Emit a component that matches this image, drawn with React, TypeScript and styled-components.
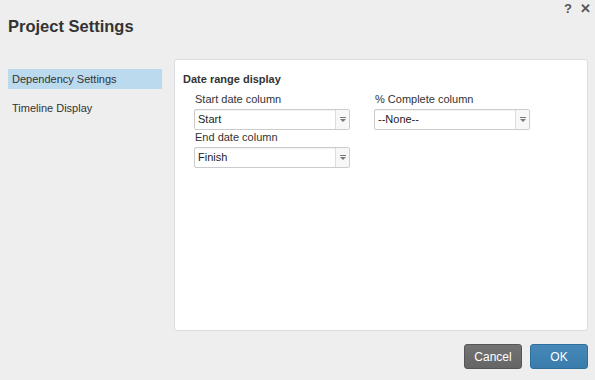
import styled, { createGlobalStyle } from "styled-components";

const GlobalStyle = createGlobalStyle`
    html, body {
        margin: 0;
        padding: 0;
        background: #eeeeee;
    }
    body {
        font-family: "Liberation Sans", Arial, sans-serif;
        color: #333333;
    }
`;

const Dialog = styled.div`
    width: 595px;
    height: 380px;
    display: flex;
    flex-direction: column;
    background: #eeeeee;
    position: relative;
    box-sizing: border-box;
`;

const Header = styled.div`
    height: 59px;
    padding: 17px 0 0 8px;
    box-sizing: border-box;
`;

const Title = styled.h1`
    margin: 0;
    font-size: 16.5px;
    font-weight: bold;
    color: #333333;
`;

const TopIcons = styled.div`
    position: absolute;
    top: 1px;
    right: 4px;
    display: flex;
    gap: 8px;
    font-size: 13px;
    color: #555555;
    font-weight: bold;
`;

const Body = styled.div`
    display: flex;
    gap: 12px;
    padding: 0 7px 0 8px;
    height: 272px;
`;

const Nav = styled.div`
    width: 154px;
    padding-top: 10px;
    display: flex;
    flex-direction: column;
`;

const NavItem = styled.div<{ $active?: boolean }>`
    height: 20px;
    line-height: 20px;
    padding-left: 4px;
    margin-bottom: 9px;
    font-size: 11px;
    color: #333333;
    background: ${(p) => (p.$active ? "#bcdaee" : "transparent")};
`;

const Panel = styled.div`
    flex: 1;
    background: #ffffff;
    border: 1px solid #dddddd;
    border-radius: 3px;
    padding: 13px 8px;
    box-sizing: border-box;
`;

const SectionTitle = styled.div`
    font-size: 11px;
    font-weight: bold;
    color: #333333;
    margin-bottom: 8px;
`;

const FieldGrid = styled.div`
    display: grid;
    grid-template-columns: 156px 156px;
    column-gap: 24px;
    row-gap: 1px;
    padding-left: 11px;
`;

const Field = styled.div`
    display: flex;
    flex-direction: column;
    gap: 4px;
`;

const Label = styled.div`
    font-size: 11px;
    color: #333333;
    padding-left: 1px;
`;

const Select = styled.div`
    height: 21px;
    border: 1px solid #cccccc;
    border-radius: 2px;
    display: flex;
    box-sizing: border-box;
    box-shadow: inset 0 1px 1px rgba(0, 0, 0, 0.06);
`;

const SelectValue = styled.div`
    flex: 1;
    font-size: 11px;
    line-height: 19px;
    padding-left: 3px;
    color: #222222;
`;

const SelectArrow = styled.div`
    width: 13px;
    border-left: 1px solid #dddddd;
    background: #f7f7f7;
    display: flex;
    align-items: center;
    justify-content: center;
`;

const Footer = styled.div`
    flex: 1;
    display: flex;
    justify-content: flex-end;
    align-items: flex-start;
    gap: 8px;
    padding: 13px 7px 0 0;
`;

const Button = styled.button<{ $primary?: boolean }>`
    width: 58px;
    height: 25px;
    border-radius: 3px;
    font-family: "Liberation Sans", Arial, sans-serif;
    font-size: 12px;
    color: #ffffff;
    border: 1px solid ${(p) => (p.$primary ? "#2f6f99" : "#555555")};
    background: ${(p) =>
        p.$primary
            ? "linear-gradient(#4689b8, #3a7cab)"
            : "linear-gradient(#737373, #656565)"};
    padding: 0;
`;

function Arrow() {
    return (
        <svg width="6" height="5" viewBox="0 0 6 5">
            <rect x="0" y="0" width="6" height="1" fill="#777" />
            <path d="M0 2 H6 L3 5 Z" fill="#777" />
        </svg>
    );
}

function DropDown({ value }: { value: string }) {
    return (
        <Select>
            <SelectValue>{value}</SelectValue>
            <SelectArrow>
                <Arrow />
            </SelectArrow>
        </Select>
    );
}

export default function App() {
    return (
        <>
            <GlobalStyle />
            <Dialog>
                <TopIcons>
                    <span>?</span>
                    <span>✕</span>
                </TopIcons>
                <Header>
                    <Title>Project Settings</Title>
                </Header>
                <Body>
                    <Nav>
                        <NavItem $active>Dependency Settings</NavItem>
                        <NavItem>Timeline Display</NavItem>
                    </Nav>
                    <Panel>
                        <SectionTitle>Date range display</SectionTitle>
                        <FieldGrid>
                            <Field>
                                <Label>Start date column</Label>
                                <DropDown value="Start" />
                            </Field>
                            <Field>
                                <Label>% Complete column</Label>
                                <DropDown value="--None--" />
                            </Field>
                            <Field>
                                <Label>End date column</Label>
                                <DropDown value="Finish" />
                            </Field>
                        </FieldGrid>
                    </Panel>
                </Body>
                <Footer>
                    <Button>Cancel</Button>
                    <Button $primary>OK</Button>
                </Footer>
            </Dialog>
        </>
    );
}
